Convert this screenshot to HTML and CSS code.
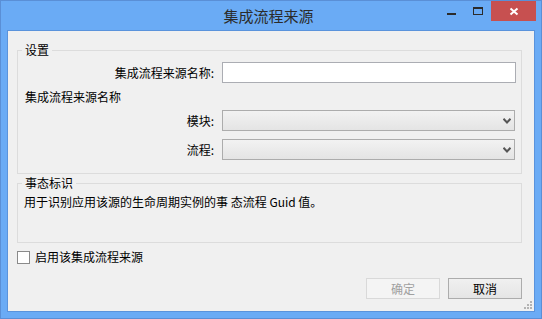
FILE: index.html
```html
<!DOCTYPE html>
<html lang="zh-CN">
<head>
<meta charset="utf-8">
<title>集成流程来源</title>
<link rel="stylesheet" href="styles.css">
</head>
<body>
<div class="window">
  <div class="titlebar">
    <div class="title">集成流程来源</div>
    <div class="controls">
      <div class="ctl min"><svg width="26" height="20" viewBox="0 0 26 20"><rect x="9" y="12" width="9" height="2" fill="#2b2b2b"/></svg></div>
      <div class="ctl max"><svg width="27" height="20" viewBox="0 0 27 20"><rect x="9.5" y="6.5" width="9" height="7" fill="none" stroke="#2b2b2b"/><rect x="9" y="6" width="10" height="2" fill="#2b2b2b"/></svg></div>
      <div class="ctl close"><svg width="45" height="20" viewBox="0 0 45 20"><path d="M19.5 7.5 L26.5 13.5 M26.5 7.5 L19.5 13.5" stroke="#fff" stroke-width="2" fill="none"/></svg></div>
    </div>
  </div>
  <div class="client">
    <div class="group group-settings">
      <div class="group-title">设置</div>
      <div class="row row-first">
        <span class="lbl">集成流程来源名称:</span>
        <div class="textbox"></div>
      </div>
      <div class="subhead">集成流程来源名称</div>
      <div class="row row-combo">
        <span class="lbl">模块:</span>
        <div class="combo"><svg class="chev" width="8" height="6" viewBox="0 0 8 6"><path d="M0.5 0.8 L4 4.5 L7.5 0.8" stroke="#555" stroke-width="2" fill="none"/></svg></div>
      </div>
      <div class="row row-combo row-combo2">
        <span class="lbl">流程:</span>
        <div class="combo"><svg class="chev" width="8" height="6" viewBox="0 0 8 6"><path d="M0.5 0.8 L4 4.5 L7.5 0.8" stroke="#555" stroke-width="2" fill="none"/></svg></div>
      </div>
    </div>
    <div class="group group-state">
      <div class="group-title">事态标识</div>
      <div class="desc">用于识别应用该源的生命周期实例的事 态流程 Guid 值。</div>
    </div>
    <div class="check-row">
      <span class="checkbox"></span>
      <span class="check-label">启用该集成流程来源</span>
    </div>
    <div class="buttons">
      <div class="btn disabled">确定</div>
      <div class="btn">取消</div>
    </div>
    <svg class="grip" width="8" height="8" viewBox="0 0 8 8">
      <g fill="#b3b3b3">
        <rect x="6" y="0" width="2" height="2"/>
        <rect x="3" y="3" width="2" height="2"/><rect x="6" y="3" width="2" height="2"/>
        <rect x="0" y="6" width="2" height="2"/><rect x="3" y="6" width="2" height="2"/><rect x="6" y="6" width="2" height="2"/>
      </g>
    </svg>
  </div>
</div>
</body>
</html>
```
FILE: styles.css
```css
* { box-sizing: border-box; }
html, body { margin: 0; padding: 0; }
body {
  width: 542px;
  height: 319px;
  overflow: hidden;
  font-family: "Noto Sans CJK SC", "Microsoft YaHei", sans-serif;
  font-size: 12px;
  color: #000;
}
.window {
  width: 542px;
  height: 319px;
  border: 1px solid #5a8fd6;
  background: #6aabf5;
  display: flex;
  flex-direction: column;
}
.titlebar {
  height: 29px;
  display: grid;
  padding-right: 5px;
}
.titlebar > * { grid-area: 1 / 1; }
.title {
  justify-self: center;
  align-self: center;
  font-size: 15px;
  line-height: 20px;
  color: #2b2b2b;
}
.controls {
  justify-self: end;
  align-self: start;
  display: flex;
  height: 20px;
}
.ctl { height: 20px; width: 26px; }
.ctl svg { display: block; }
.ctl.max { width: 27px; }
.ctl.close { width: 45px; background: #c75050; }
.client {
  flex: 1;
  margin: 0 6px 6px;
  border: 1px solid #5a93dc;
  background: #f0f0f0;
  position: relative;
}
.group {
  border: 1px solid #dcdcdc;
  margin: 0 12px 0 9px;
}
.group-settings { margin-top: 19px; height: 124px; }
.group-state { margin-top: 9px; height: 60px; }
.group-title {
  width: max-content;
  margin: -8px 0 0 4px;
  padding: 0 3px;
  background: #f0f0f0;
  line-height: 14px;
}
.row {
  display: grid;
  grid-template-columns: 196px 1fr;
  column-gap: 8px;
  align-items: center;
  padding-right: 5px;
}
.row-first { margin-top: 5px; }
.row-combo { margin-top: 6px; }
.row-combo2 { margin-top: 8px; }
.lbl { text-align: right; line-height: 14px; }
.textbox {
  height: 21px;
  border: 1px solid #abadb3;
  background: #fff;
}
.subhead { margin: 7px 0 0 7px; line-height: 14px; }
.combo {
  height: 21px;
  margin-right: 1px;
  border: 1px solid #acacac;
  background: linear-gradient(#f2f2f2, #e4e4e4);
  display: flex;
  align-items: center;
  justify-content: flex-end;
  padding-right: 3px;
}
.chev { display: block; }
.desc { margin: 5px 0 0 6px; line-height: 14px; }
.check-row {
  margin: 7px 0 0 9px;
  display: flex;
  align-items: center;
  gap: 5px;
}
.checkbox {
  width: 13px;
  height: 13px;
  border: 1px solid #8a8a8a;
  background: #fff;
}
.check-label { line-height: 14px; }
.buttons {
  margin-top: 14px;
  padding-right: 12px;
  display: flex;
  justify-content: flex-end;
  gap: 8px;
}
.btn {
  width: 74px;
  height: 21px;
  border: 1px solid #acacac;
  background: linear-gradient(#f0f0f0, #e5e5e5);
  display: flex;
  align-items: center;
  justify-content: center;
  line-height: 14px;
}
.btn.disabled {
  border-color: #d9d9d9;
  background: #f4f4f4;
  color: #a0a0a0;
}
.grip {
  position: absolute;
  right: 2px;
  bottom: 2px;
  display: block;
}
```
